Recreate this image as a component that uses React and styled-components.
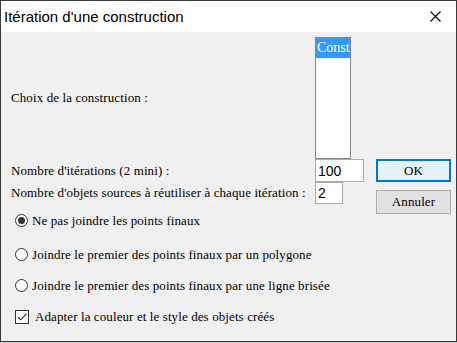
import React from "react";
import styled, { createGlobalStyle } from "styled-components";

const Global = createGlobalStyle`
html, body {
margin: 0;
padding: 0;
background: #cdcdcd;
}
`

const Window = styled.div`
box-sizing: border-box;
width: 457px;
height: 342px;
border: 1px solid #3a3a3a;
background: #f0f0f0;
display: flex;
flex-direction: column;
overflow: hidden;
`

const TitleBar = styled.div`
height: 31px;
flex: none;
background: #ffffff;
display: flex;
align-items: center;
justify-content: space-between;
padding: 0 15px 0 3px;
font-family: "Liberation Sans", Arial, sans-serif;
font-size: 15px;
color: #000;
`

const Body = styled.div`
display: grid;
grid-template-columns: 304px 61px 75px;
grid-template-rows: 122px 23px 22px auto auto auto auto;
padding: 5px 0 0 10px;
font-family: "Liberation Serif", "Times New Roman", serif;
font-size: 13px;
letter-spacing: 0.1px;
color: #000;
`

const Label = styled.div`
grid-column: 1;
display: flex;
align-items: center;
white-space: nowrap;
`

const ListBox = styled.div`
box-sizing: border-box;
grid-column: 2;
width: 36px;
height: 122px;
border: 1px solid #828790;
background: #fff;
overflow: hidden;
`

const ListItem = styled.div`
height: 20px;
line-height: 20px;
padding-left: 1px;
font-size: 14px;
letter-spacing: 0;
white-space: nowrap;
background: ${p => (p.$selected ? "#3399ff" : "transparent")};
color: ${p => (p.$selected ? "#fff" : "#000")};
`

const Field = styled.div`
box-sizing: border-box;
grid-column: 2;
width: ${p => p.$w}px;
height: ${p => p.$h}px;
border: 1px solid #ababab;
background: #fff;
padding-left: 2px;
display: flex;
align-items: center;
font-family: "Liberation Sans", Arial, sans-serif;
font-size: 14px;
letter-spacing: 0;
`

const ButtonColumn = styled.div`
grid-column: 3;
grid-row: 2 / 5;
align-self: start;
display: flex;
flex-direction: column;
gap: 8px;
`

const Button = styled.div`
box-sizing: border-box;
height: ${p => (p.$default ? 23 : 24)}px;
display: flex;
align-items: center;
justify-content: center;
background: ${p => (p.$default ? "#e5f1fb" : "#e1e1e1")};
border: ${p => (p.$default ? "2px solid #0078d7" : "1px solid #adadad")};
`

const Option = styled.div`
grid-column: 1 / 3;
height: 17px;
margin-top: ${p => p.$top}px;
padding-left: 4px;
display: flex;
align-items: center;
gap: 4px;
white-space: nowrap;
`

const Radio = styled.span`
box-sizing: border-box;
flex: none;
width: 13px;
height: 13px;
border-radius: 50%;
border: 1px solid #333;
background: #fff;
display: flex;
align-items: center;
justify-content: center;
&::after {
content: "";
width: 7px;
height: 7px;
border-radius: 50%;
background: ${p => (p.$checked ? "#333" : "transparent")};
}
`

const Check = styled.span`
box-sizing: border-box;
flex: none;
width: 14px;
height: 14px;
border: 1px solid #333;
background: #fff;
display: flex;
align-items: center;
justify-content: center;
margin-right: 2px;
`

const App = () => {
    return (
        <>
            <Global />
            <Window>
                <TitleBar>
                    <span>Itération d'une construction</span>
                    <svg width="11" height="11" viewBox="0 0 11 11">
                        <path d="M0.5 0.5 L10.5 10.5 M10.5 0.5 L0.5 10.5" stroke="#000" strokeWidth="1.1" />
                    </svg>
                </TitleBar>
                <Body>
                    <Label>Choix de la construction :</Label>
                    <ListBox>
                        <ListItem $selected>Const</ListItem>
                    </ListBox>
                    <div />
                    <Label>Nombre d'itérations (2 mini) :</Label>
                    <Field $w={49} $h={23}>100</Field>
                    <ButtonColumn>
                        <Button $default>OK</Button>
                        <Button>Annuler</Button>
                    </ButtonColumn>
                    <Label>Nombre d'objets sources à réutiliser à chaque itération :</Label>
                    <Field $w={28} $h={22}>2</Field>
                    <Option $top={8}>
                        <Radio $checked />
                        Ne pas joindre les points finaux
                    </Option>
                    <Option $top={17}>
                        <Radio />
                        Joindre le premier des points finaux par un polygone
                    </Option>
                    <Option $top={14}>
                        <Radio />
                        Joindre le premier des points finaux par une ligne brisée
                    </Option>
                    <Option $top={14}>
                        <Check>
                            <svg width="10" height="8" viewBox="0 0 10 8">
                                <path d="M0.8 4 L3.6 6.8 L9.2 1" fill="none" stroke="#333" strokeWidth="1.1" />
                            </svg>
                        </Check>
                        Adapter la couleur et le style des objets créés
                    </Option>
                </Body>
            </Window>
        </>
    )
}

export default App;
